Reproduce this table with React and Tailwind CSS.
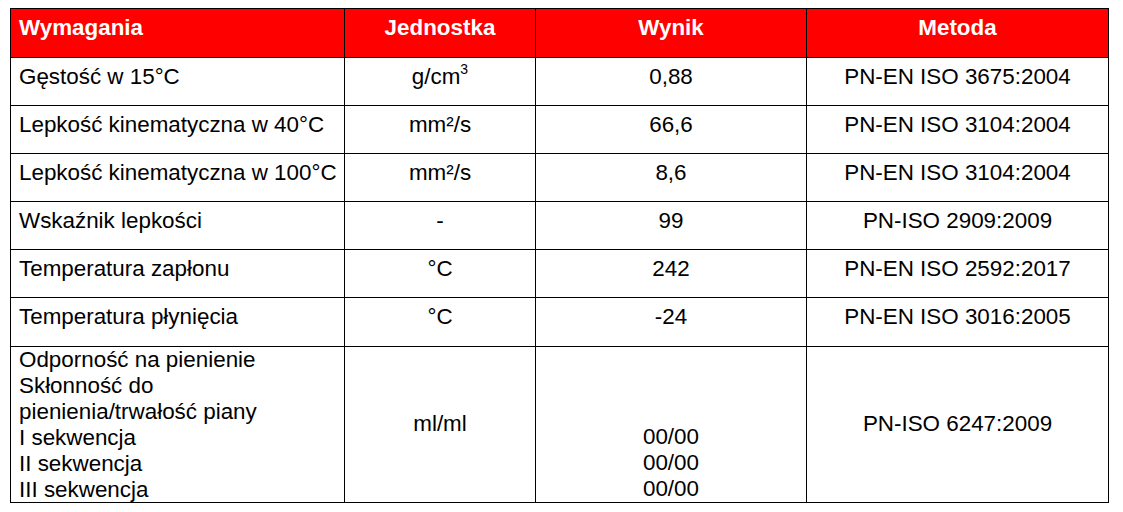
import React from 'react';

const rows = [
  { name: 'Gęstość w 15°C', unit: <>g/cm<sup className="text-[14px] relative -top-[2px] align-super leading-none">3</sup></>, result: '0,88', method: 'PN-EN ISO 3675:2004', h: 'h-[48px]' },
  { name: 'Lepkość kinematyczna w 40°C', unit: 'mm²/s', result: '66,6', method: 'PN-EN ISO 3104:2004', h: 'h-[48px]' },
  { name: 'Lepkość kinematyczna w 100°C', unit: 'mm²/s', result: '8,6', method: 'PN-EN ISO 3104:2004', h: 'h-[48px]' },
  { name: 'Wskaźnik lepkości', unit: '-', result: '99', method: 'PN-ISO 2909:2009', h: 'h-[48px]' },
  { name: 'Temperatura zapłonu', unit: '°C', result: '242', method: 'PN-EN ISO 2592:2017', h: 'h-[48px]' },
  { name: 'Temperatura płynięcia', unit: '°C', result: '-24', method: 'PN-EN ISO 3016:2005', h: 'h-[49px]' },
];

const cell = 'border-r border-b border-black';

export default function App() {
  return (
    <div className="w-[1123px] h-[512px] bg-white pt-[8px] pl-[10px] font-['Liberation_Sans',Arial,sans-serif] text-[22.4px] leading-[26px] text-black">
      <div className="grid grid-cols-[334px_191px_271px_302px] w-[1099px] border-l border-t border-black">
        {/* header */}
        <div className={`${cell} h-[49px] bg-[#ff0000] text-white font-bold px-2 pt-[6px]`}>Wymagania</div>
        <div className={`${cell} h-[49px] bg-[#ff0000] text-white font-bold text-center pt-[6px]`}>Jednostka</div>
        <div className={`${cell} h-[49px] bg-[#ff0000] text-white font-bold text-center pt-[6px]`}>Wynik</div>
        <div className={`${cell} h-[49px] bg-[#ff0000] text-white font-bold text-center pt-[6px]`}>Metoda</div>

        {rows.map((r) => (
          <React.Fragment key={r.name}>
            <div className={`${cell} ${r.h} px-2 pt-[6px] whitespace-nowrap`}>{r.name}</div>
            <div className={`${cell} ${r.h} text-center pt-[6px]`}>{r.unit}</div>
            <div className={`${cell} ${r.h} text-center pt-[6px]`}>{r.result}</div>
            <div className={`${cell} ${r.h} text-center pt-[6px]`}>{r.method}</div>
          </React.Fragment>
        ))}

        {/* foam row */}
        <div className={`${cell} h-[156px] px-2`}>
          <div>Odporność na pienienie</div>
          <div>Skłonność do</div>
          <div>pienienia/trwałość piany</div>
          <div>I sekwencja</div>
          <div>II sekwencja</div>
          <div>III sekwencja</div>
        </div>
        <div className={`${cell} h-[156px] flex items-center justify-center pb-[2px]`}>ml/ml</div>
        <div className={`${cell} h-[156px] flex flex-col justify-end items-center`}>
          <div>00/00</div>
          <div>00/00</div>
          <div>00/00</div>
        </div>
        <div className={`${cell} h-[156px] flex items-center justify-center pb-[2px]`}>PN-ISO 6247:2009</div>
      </div>
    </div>
  );
}
